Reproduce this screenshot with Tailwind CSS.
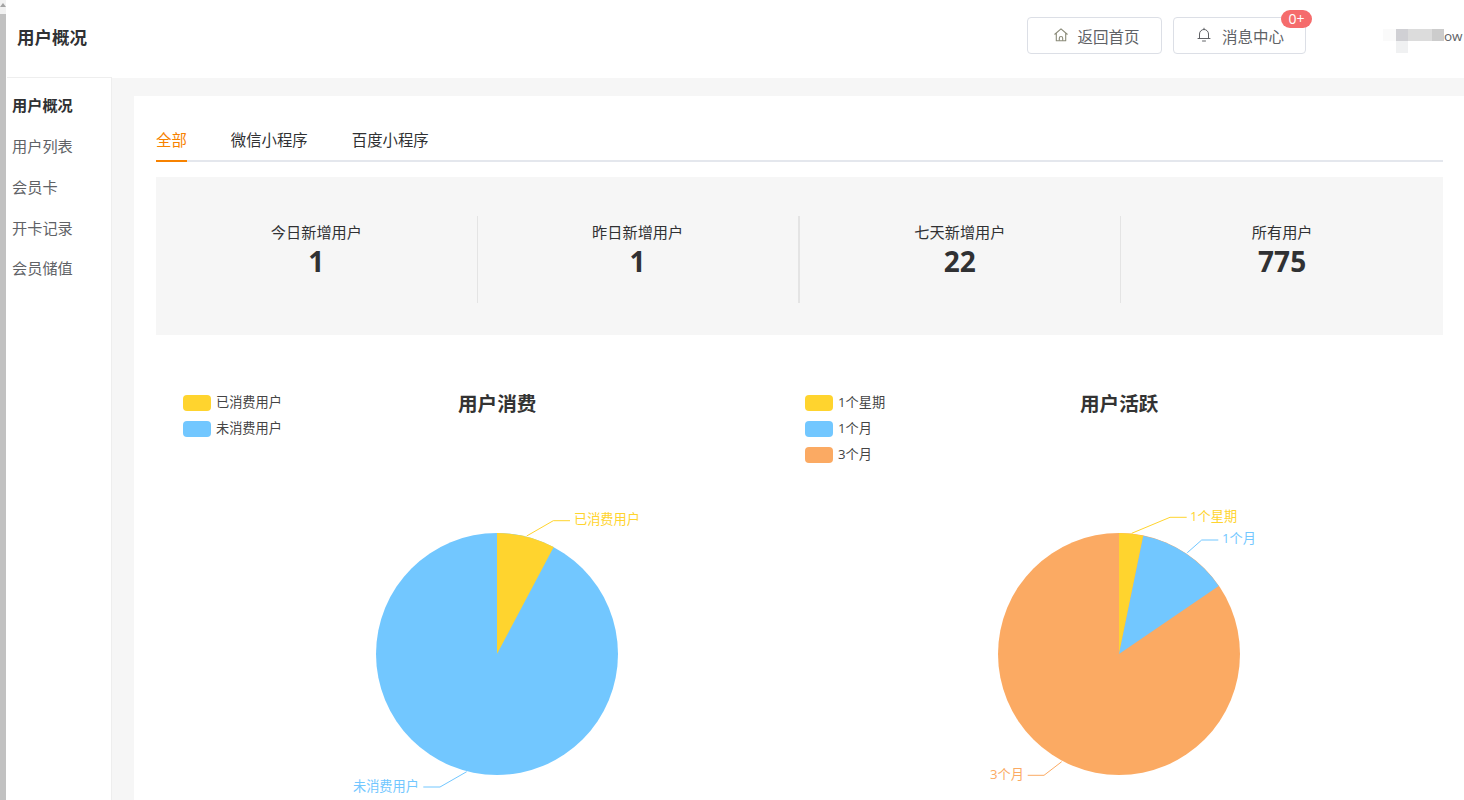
<!DOCTYPE html>
<html lang="zh-CN">
  <head>
    <meta charset="UTF-8" />
    <title>用户概况</title>
    <script src="https://cdn.jsdelivr.net/npm/@tailwindcss/browser@4"></script>
  </head>
  <body class="h-screen overflow-hidden bg-white text-[#303133] font-['Open_Sans','Noto_Sans_CJK_SC',sans-serif]">
    <div class="flex h-[800px]">
      <!-- scrollbar -->
      <div class="w-[7px] shrink-0 flex flex-col">
        <div class="h-[14px] w-[6px] bg-[#f1f1f1] pt-[3px]">
          <svg class="block w-[6px] h-[4px]" viewBox="0 0 6 4"><path d="M3 0 6 4H0Z" fill="#a3a3a3" /></svg>
        </div>
        <div class="flex-1 w-[6px] bg-[#c1c1c1]"></div>
      </div>

      <div class="flex-1 min-w-0 flex flex-col">
        <!-- Header -->
        <header class="h-[78px] shrink-0 flex items-center pl-[10px] pb-[2px]">
          <h1 class="text-[17.5px] font-bold leading-none">用户概况</h1>
          <div class="ml-auto flex items-center h-[36px] mt-[-6px]">
            <a class="w-[135px] h-[37px] pt-[5px] pl-[4px] flex items-center justify-center gap-[8px] rounded-[4px] border border-[#dcdfe6] text-[15.5px] text-[#606266]">
              <svg class="w-[16px] h-[16px] -mt-[5px]" viewBox="0 0 16 16" fill="none" stroke="#8a8a78" stroke-width="1.1" stroke-linejoin="round"><path d="M1.5 7.5 8 1.8l6.5 5.7M3.3 6.2v7.6h9.4V6.2"/><path d="M6.3 13.8v-2.6a1.7 1.7 0 0 1 3.4 0v2.6"/></svg>
              <span>返回首页</span>
            </a>
            <a class="relative ml-[11px] w-[133px] h-[37px] pt-[5px] pl-[1px] flex items-center justify-center gap-[10px] rounded-[4px] border border-[#dcdfe6] text-[15.5px] text-[#606266]">
              <svg class="w-[16px] h-[16px] -mt-[5px]" viewBox="0 0 16 16" fill="none" stroke="#606266" stroke-width="1" stroke-linecap="round"><path d="M3.5 11.5V7a4.5 4.5 0 0 1 9 0v4.5M2 11.5h12M8 1.2v1.3M6.5 14h3"/></svg>
              <span>消息中心</span>
              <span class="absolute left-[107px] top-[-8px] w-[31px] h-[18px] rounded-[9px] bg-[#f56c6c] text-white text-[14px] leading-[18px] text-center">0+</span>
            </a>
            <div class="ml-[77px] mr-[1px] w-[80px] flex items-start h-[24px] mt-[11px]">
              <div class="w-[13px] h-[12px] bg-[#fafafa]"></div>
              <div class="flex flex-col">
                <div class="w-[12px] h-[12px] bg-[#d0d0d4]"></div>
                <div class="w-[12px] h-[12px] bg-[#f0f1f2]"></div>
              </div>
              <div class="w-[24px] h-[12px] bg-[#dcdcdc]"></div>
              <div class="w-[12px] h-[12px] bg-[#cccccc]"></div>
              <span class="text-[13.5px] leading-[14px] text-[#606266]">ow</span>
            </div>
          </div>
        </header>

        <div class="flex-1 flex min-h-0">
          <!-- Sidebar -->
          <aside class="w-[105px] shrink-0 border-t border-r border-[#eeeeee] -mt-[1px] pl-[5px] pt-[7px] text-[15.2px] text-[#606266]">
            <ul>
              <li class="h-[41px] leading-[40px] font-bold text-[#303133]">用户概况</li>
              <li class="h-[41px] leading-[40px]">用户列表</li>
              <li class="h-[41px] leading-[41px]">会员卡</li>
              <li class="h-[40px] leading-[41px]">开卡记录</li>
              <li class="h-[41px] leading-[41px]">会员储值</li>
            </ul>
          </aside>

          <!-- Content -->
          <main class="flex-1 min-w-0 bg-[#f6f6f6] pt-[18px] pl-[22px]">
            <div class="bg-white h-full pl-[22px] pr-[21px] pt-[24px]">
              <div class="flex gap-[44px] h-[42px] border-b-2 border-[#e4e7ed] text-[15.4px] leading-[42px]">
                <span class="h-[42px] border-b-2 border-[#f78200] text-[#f78200]">全部</span>
                <span>微信小程序</span>
                <span>百度小程序</span>
              </div>

              <div class="mt-[15px] h-[158px] bg-[#f6f6f6] pt-[39px] grid grid-cols-4">
                <div class="h-[87px] border-r border-[#e4e4e4] text-center">
                  <p class="text-[15.2px] leading-[32px]">今日新增用户</p>
                  <p class="text-[28px] font-bold leading-[27px]">1</p>
                </div>
                <div class="h-[87px] border-r-2 border-[#e4e4e4] text-center">
                  <p class="text-[15.2px] leading-[32px]">昨日新增用户</p>
                  <p class="text-[28px] font-bold leading-[27px]">1</p>
                </div>
                <div class="h-[87px] border-r border-[#e4e4e4] text-center">
                  <p class="text-[15.2px] leading-[32px]">七天新增用户</p>
                  <p class="text-[28px] font-bold leading-[27px]">22</p>
                </div>
                <div class="h-[87px] text-center">
                  <p class="text-[15.2px] leading-[32px]">所有用户</p>
                  <p class="text-[28px] font-bold leading-[27px]">775</p>
                </div>
              </div>

              <!-- Charts -->
              <div class="flex ml-[27px] mt-[60px]">
                <section class="w-[622px] shrink-0">
                  <div class="flex h-[105px]">
                    <ul class="w-[275px] text-[13.2px] text-[#444444] leading-[14px] flex flex-col gap-[10px]">
                      <li class="flex gap-[5px]"><i class="w-[28px] h-[16px] rounded-[4px] bg-[#ffd42e]"></i>已消费用户</li>
                      <li class="flex gap-[5px]"><i class="w-[28px] h-[16px] rounded-[4px] bg-[#72c7ff]"></i>未消费用户</li>
                    </ul>
                    <h2 class="text-[19.6px] font-bold text-[#333333] leading-[18px]">用户消费</h2>
                  </div>
                  <svg width="622" height="300" viewBox="0 0 622 300" class="block" font-size="13.2" font-family="'Open Sans','Noto Sans CJK SC',sans-serif">
                    <circle cx="314" cy="154" r="121" fill="#72c7ff" />
                    <path d="M314 154V33A121 121 0 0 1 370.7 47.1Z" fill="#ffd42e" />
                    <path d="M343.7 36L370.3 20.7H387" fill="none" stroke="#ffd42e" />
                    <text x="391" y="24" fill="#ffd42e">已消费用户</text>
                    <path d="M283.7 271.7L257 287H240.3" fill="none" stroke="#72c7ff" />
                    <text x="170" y="291" fill="#72c7ff">未消费用户</text>
                  </svg>
                </section>

                <section class="w-[622px] shrink-0">
                  <div class="flex h-[105px]">
                    <ul class="w-[275px] text-[13.2px] text-[#444444] leading-[14px] flex flex-col gap-[10px]">
                      <li class="flex gap-[5px]"><i class="w-[28px] h-[16px] rounded-[4px] bg-[#ffd42e]"></i>1个星期</li>
                      <li class="flex gap-[5px]"><i class="w-[28px] h-[16px] rounded-[4px] bg-[#72c7ff]"></i>1个月</li>
                      <li class="flex gap-[5px]"><i class="w-[28px] h-[16px] rounded-[4px] bg-[#fbaa63]"></i>3个月</li>
                    </ul>
                    <h2 class="text-[19.6px] font-bold text-[#333333] leading-[18px]">用户活跃</h2>
                  </div>
                  <svg width="622" height="300" viewBox="0 0 622 300" class="block" font-size="13.2" font-family="'Open Sans','Noto Sans CJK SC',sans-serif">
                    <circle cx="314" cy="154" r="121" fill="#fbaa63" />
                    <path d="M314 154V33A121 121 0 0 1 338.3 35.7Z" fill="#ffd42e" />
                    <path d="M314 154L338.3 35.7A121 121 0 0 1 413.7 86Z" fill="#72c7ff" />
                    <path d="M326.7 33.3L365 17.3H381.7" fill="none" stroke="#ffd42e" />
                    <text x="385" y="21" fill="#ffd42e">1个星期</text>
                    <path d="M382.3 52.7L396.7 40H413.3" fill="none" stroke="#72c7ff" />
                    <text x="417" y="43" fill="#72c7ff">1个月</text>
                    <path d="M256.7 261.7L239 275.3H222.7" fill="none" stroke="#fbaa63" />
                    <text x="185" y="279" fill="#fbaa63">3个月</text>
                  </svg>
                </section>
              </div>
            </div>
          </main>
        </div>
      </div>
    </div>
  </body>
</html>
